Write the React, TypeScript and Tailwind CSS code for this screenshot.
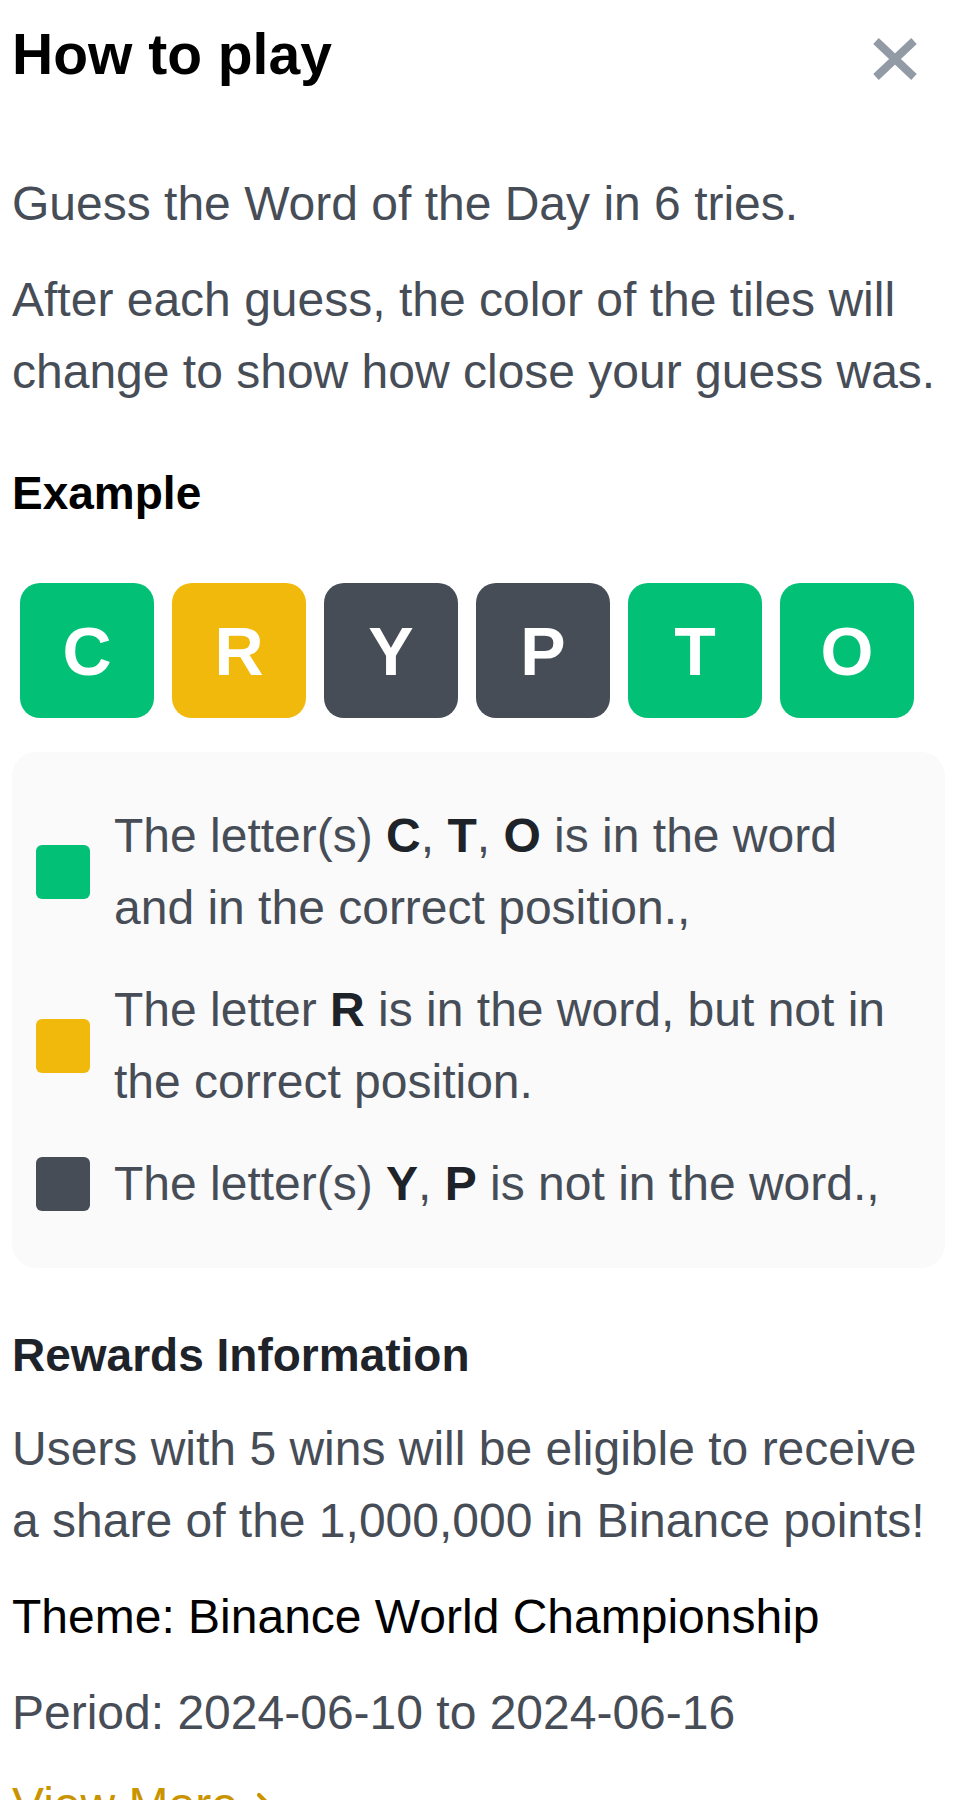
import { ChevronRight } from 'lucide-react';

const tiles = [
  { letter: 'C', color: 'bg-[#02C076]' },
  { letter: 'R', color: 'bg-[#F0B90B]' },
  { letter: 'Y', color: 'bg-[#474D57]' },
  { letter: 'P', color: 'bg-[#474D57]' },
  { letter: 'T', color: 'bg-[#02C076]' },
  { letter: 'O', color: 'bg-[#02C076]' },
];

function CloseIcon() {
  return (
    <svg width="46" height="44" viewBox="0 0 46 44" className="overflow-visible">
      <path d="M4 4 L42 40 M42 4 L4 40" stroke="#929AA5" strokeWidth="8" fill="none" />
    </svg>
  );
}

function LegendRow({ color, children }: { color: string; children: React.ReactNode }) {
  return (
    <div className="flex items-center gap-[24px]">
      <span className={`w-[54px] h-[54px] rounded-[6px] shrink-0 ${color}`} />
      <p className="text-[48px] leading-[72px] text-[#474D57]">{children}</p>
    </div>
  );
}

export default function App() {
  return (
    <div className="min-h-screen bg-white pl-3 pr-[32px] font-['Liberation_Sans',Arial,sans-serif] overflow-hidden">
      {/* Header */}
      <div className="flex justify-between items-start pt-[20px]">
        <h1 className="text-[57px] leading-[68px] font-bold text-black">How to play</h1>
        <button className="mt-[17px] mr-[27px]">
          <CloseIcon />
        </button>
      </div>

      <p className="mt-[80px] text-[48px] leading-[72px] text-[#474D57]">
        Guess the Word of the Day in 6 tries.
      </p>
      <p className="mt-[24px] text-[48px] leading-[72px] text-[#474D57]">
        After each guess, the color of the tiles will change to show how close your guess was.
      </p>

      <h2 className="mt-[49px] text-[46px] leading-[72px] font-bold text-black">Example</h2>

      {/* Tiles */}
      <div className="mt-[54px] pl-[8px] flex gap-[18px]">
        {tiles.map((t, i) => (
          <div
            key={i}
            className={`w-[134px] h-[135px] rounded-[20px] flex items-center justify-center text-white text-[68px] font-bold ${t.color}`}
          >
            {t.letter}
          </div>
        ))}
      </div>

      {/* Legend */}
      <div className="mt-[34px] bg-[#FAFAFA] rounded-[24px] pt-[48px] pb-[48px] pl-[24px] pr-[32px] flex flex-col gap-[30px]">
        <LegendRow color="bg-[#02C076]">
          The letter(s) <b className="text-[#1E2329]">C</b>, <b className="text-[#1E2329]">T</b>,{' '}
          <b className="text-[#1E2329]">O</b> is in the word and in the correct position.,
        </LegendRow>
        <LegendRow color="bg-[#F0B90B]">
          The letter <b className="text-[#1E2329]">R</b> is in the word, but not in the correct position.
        </LegendRow>
        <LegendRow color="bg-[#474D57]">
          The letter(s) <b className="text-[#1E2329]">Y</b>, <b className="text-[#1E2329]">P</b> is not in the word.,
        </LegendRow>
      </div>

      {/* Rewards */}
      <h2 className="mt-[51px] text-[46px] leading-[72px] font-bold text-[#1E2329]">Rewards Information</h2>
      <p className="mt-[22px] text-[48px] leading-[72px] text-[#474D57]">
        Users with 5 wins will be eligible to receive a share of the 1,000,000 in Binance points!
      </p>
      <p className="mt-[24px] text-[48px] leading-[72px] text-black">Theme: Binance World Championship</p>
      <p className="mt-[24px] text-[48px] leading-[72px] text-[#474D57]">Period: 2024-06-10 to 2024-06-16</p>
      <a className="mt-[20px] flex items-center gap-[6px] text-[48px] leading-[72px] text-[#C99400]">
        View More
        <ChevronRight className="w-[40px] h-[40px]" strokeWidth={2.5} />
      </a>
    </div>
  );
}
